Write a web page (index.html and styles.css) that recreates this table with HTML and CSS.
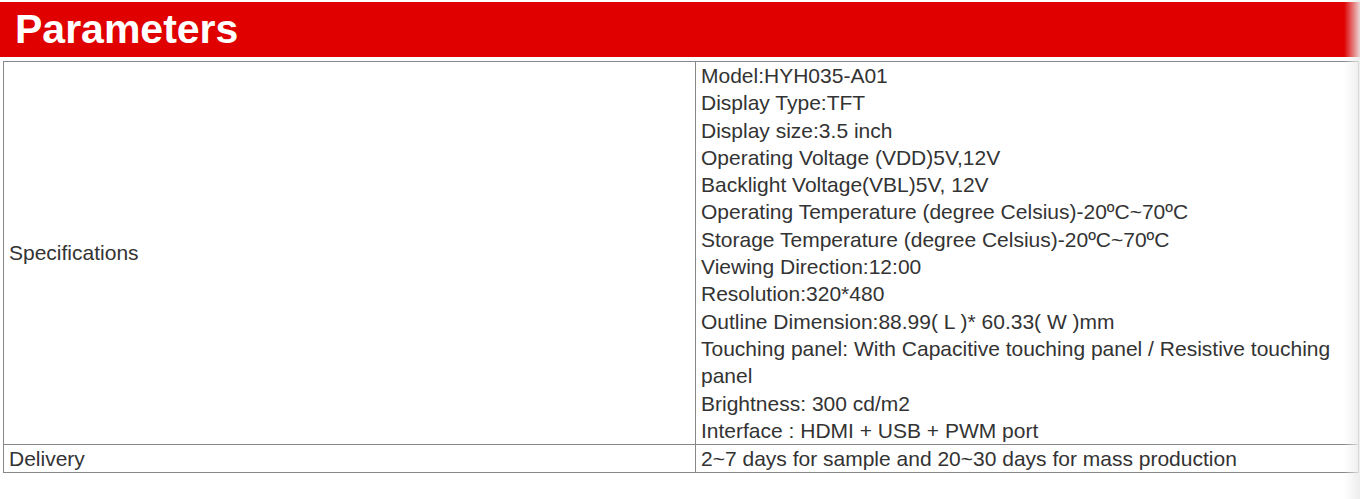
FILE: index.html
```html
<!DOCTYPE html>
<html>
<head>
<meta charset="utf-8">
<link rel="stylesheet" href="styles.css">
</head>
<body>
<div class="page">
  <h2 class="title">Parameters</h2>
  <table class="params">
    <colgroup>
      <col class="col-label">
      <col class="col-value">
    </colgroup>
    <tr>
      <td class="label">Specifications</td>
      <td class="value">
        Model:HYH035-A01<br>
        Display Type:TFT<br>
        Display size:3.5 inch<br>
        Operating Voltage (VDD)5V,12V<br>
        Backlight Voltage(VBL)5V, 12V<br>
        Operating Temperature (degree Celsius)-20ºC~70ºC<br>
        Storage Temperature (degree Celsius)-20ºC~70ºC<br>
        Viewing Direction:12:00<br>
        Resolution:320*480<br>
        Outline Dimension:88.99( L )* 60.33( W )mm<br>
        Touching panel: With Capacitive touching panel / Resistive touching panel<br>
        Brightness: 300 cd/m2<br>
        Interface : HDMI + USB + PWM port
      </td>
    </tr>
    <tr>
      <td class="label">Delivery</td>
      <td class="value">2~7 days for sample and 20~30 days for mass production</td>
    </tr>
  </table>
</div>
<div class="edge-shade"></div>
</body>
</html>
```

FILE: styles.css
```css
html, body {
  margin: 0;
  padding: 0;
  background: #fff;
  overflow: hidden;
}

.page {
  padding-top: 2px;
  font-family: "Liberation Sans", Arial, sans-serif;
}

.title {
  margin: 0;
  height: 55px;
  background: #e00000;
  color: #fff;
  font-size: 41px;
  font-weight: bold;
  line-height: 55px;
  padding-left: 15px;
  box-sizing: border-box;
}

.params {
  margin: 4px 0 0 3px;
  width: 1356px;
  border-collapse: collapse;
  table-layout: fixed;
  color: #333;
  font-size: 21px;
  line-height: 27.3px;
}

.col-label {
  width: 692px;
}

.params td {
  border: 1px solid #888;
  padding: 0 5px;
  text-align: left;
}

.params .label {
  vertical-align: middle;
}

.params .value {
  vertical-align: top;
}

.edge-shade {
  position: fixed;
  top: 0;
  right: 0;
  width: 16px;
  height: 100%;
  background: linear-gradient(to right, rgba(255,255,255,0), rgba(235,235,235,0.9));
  pointer-events: none;
}
```
